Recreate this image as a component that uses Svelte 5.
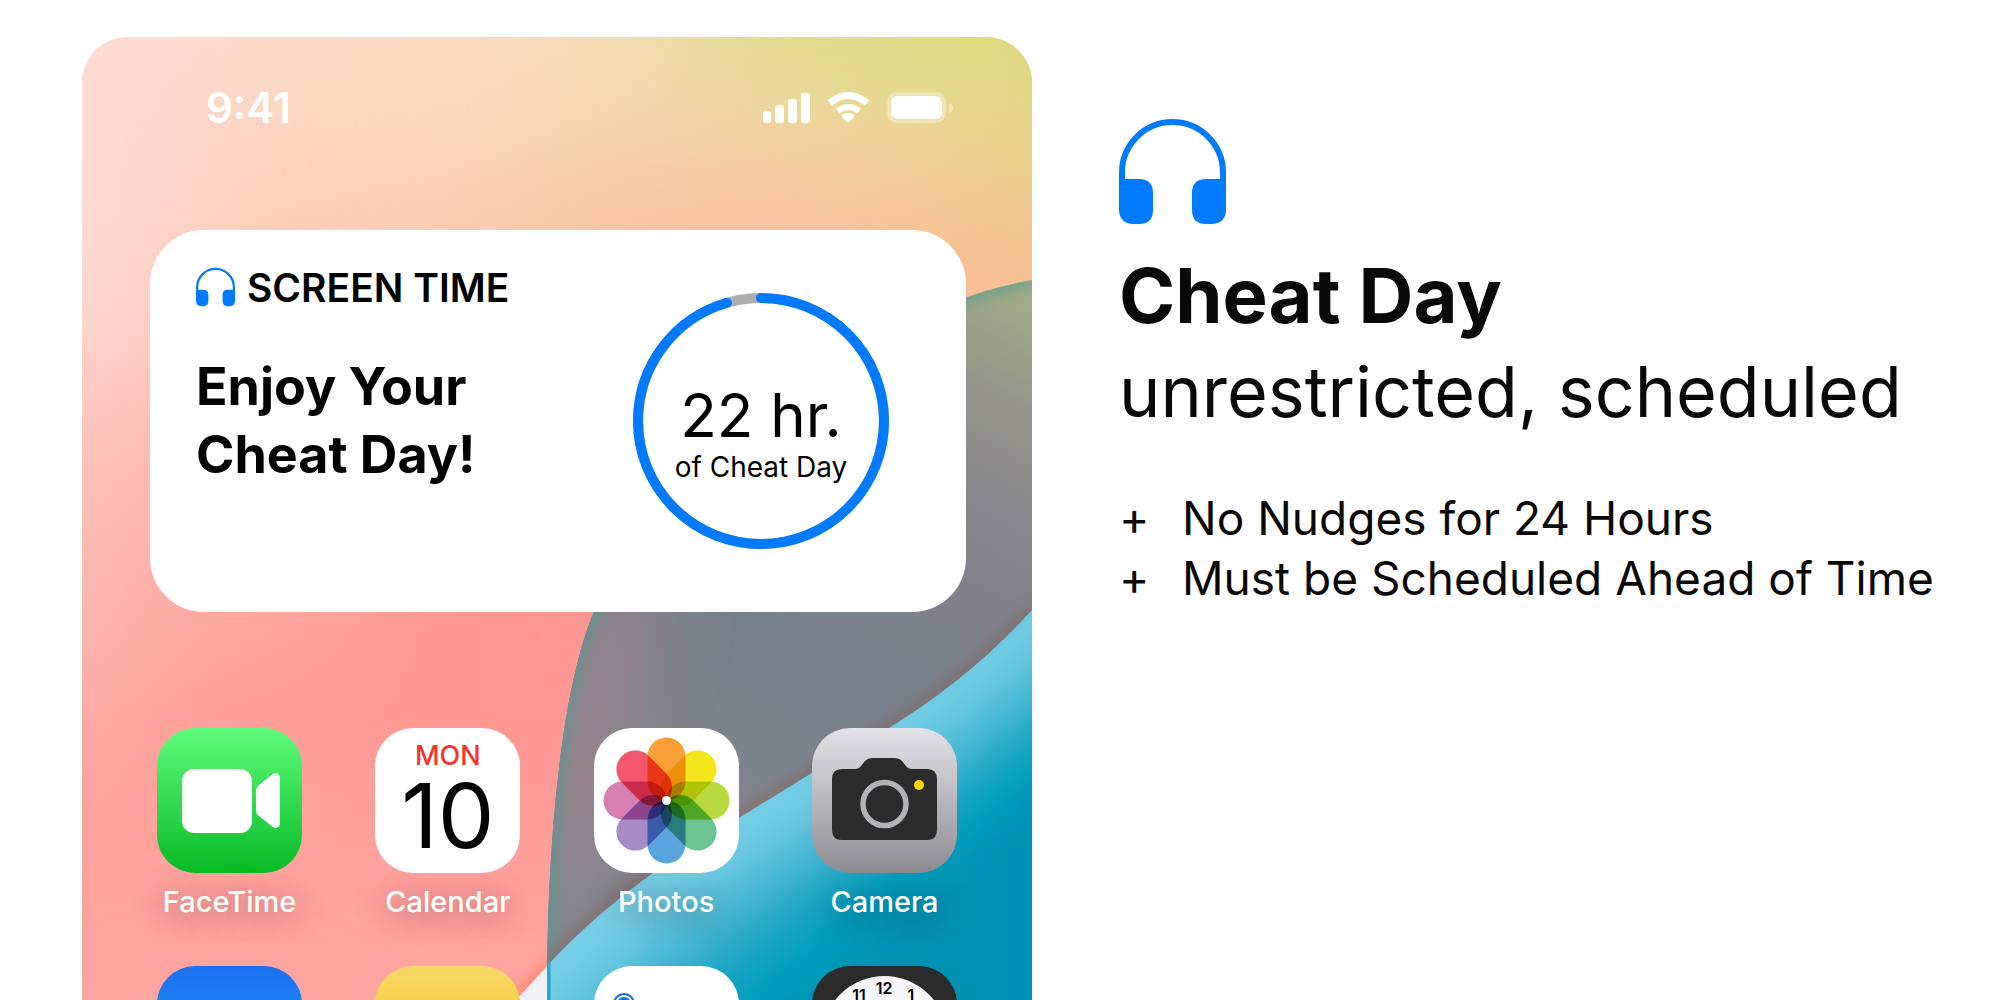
<script>
  const petals = ['#f8a035', '#f4e61c', '#b9d93f', '#6cc392', '#58a4de', '#a68bc8', '#d67fb4', '#f2586c'];
  const features = ['No Nudges for 24 Hours', 'Must be Scheduled Ahead of Time'];
  const ringLength = 2 * Math.PI * 123;
  const ringShare = 0.955;
</script>

{#snippet headphones()}
  <svg class="headphones" viewBox="0 0 107 105" aria-hidden="true">
    <path d="M3 62V53.500a50.500 50.500 0 0 1 101 0V62" fill="none" stroke="#007aff" stroke-width="6" />
    <path d="M0 60H20Q34 60 34 74V91Q34 105 20 105H15Q0 105 0 90Z" fill="#007aff" />
    <path d="M107 60H87Q73 60 73 74V91Q73 105 87 105H92Q107 105 107 90Z" fill="#007aff" />
  </svg>
{/snippet}

<main>
  <section class="phone" aria-label="Home screen">
    <svg class="wallpaper" viewBox="0 0 950 963" preserveAspectRatio="none" aria-hidden="true">
      <defs>
        <linearGradient id="sky" x1="0" y1="0" x2="0" y2="1">
          <stop offset="0" stop-color="#fbdcc6" />
          <stop offset="0.18" stop-color="#fccfb8" />
          <stop offset="0.45" stop-color="#ffb3a8" />
          <stop offset="0.7" stop-color="#ff9e9a" />
          <stop offset="1" stop-color="#ffa6a2" />
        </linearGradient>
        <linearGradient id="band" gradientUnits="userSpaceOnUse" x1="900" y1="240" x2="600" y2="800">
          <stop offset="0" stop-color="#a0ac86" />
          <stop offset="0.16" stop-color="#94948a" />
          <stop offset="0.35" stop-color="#85838c" />
          <stop offset="0.65" stop-color="#75808b" />
          <stop offset="1" stop-color="#84868f" />
        </linearGradient>
        <linearGradient id="sea" gradientUnits="userSpaceOnUse" x1="630" y1="740" x2="790" y2="930">
          <stop offset="0" stop-color="#62c3dd" />
          <stop offset="0.45" stop-color="#34adcb" />
          <stop offset="0.8" stop-color="#009dbd" />
          <stop offset="1" stop-color="#0092b4" />
        </linearGradient>
        <filter id="haze" filterUnits="userSpaceOnUse" x="-600" y="-600" width="2200" height="2200" color-interpolation-filters="sRGB"><feGaussianBlur stdDeviation="80" /></filter>
        <filter id="mist" filterUnits="userSpaceOnUse" x="-300" y="-300" width="1600" height="1600" color-interpolation-filters="sRGB"><feGaussianBlur stdDeviation="40" /></filter>
        <filter id="soft" filterUnits="userSpaceOnUse" x="-200" y="-200" width="1400" height="1400" color-interpolation-filters="sRGB"><feGaussianBlur stdDeviation="7" /></filter>
        <clipPath id="bandClip"><path d="M950 243C850 260 720 330 640 420C560 500 533 535 514 570C487 630 465 760 465 963H950Z" /></clipPath>
        <clipPath id="seaClip"><path d="M950 543V573Q890 640 807 691L730 736L657 781L571 836Q510 880 465 929V963H950Z" /></clipPath>
      </defs>
      <rect width="950" height="963" fill="url(#sky)" />
      <g filter="url(#haze)">
        <ellipse cx="-60" cy="120" rx="160" ry="330" fill="#ffdad6" />
        <ellipse cx="900" cy="-40" rx="330" ry="140" fill="#dddb7c" />
        <ellipse cx="1020" cy="110" rx="120" ry="90" fill="#e2d480" />
        <ellipse cx="540" cy="60" rx="150" ry="80" fill="#efdaae" />
        <ellipse cx="620" cy="225" rx="190" ry="50" fill="#fbb084" />
        <ellipse cx="900" cy="245" rx="130" ry="60" fill="#f8b27e" />
        <ellipse cx="440" cy="600" rx="150" ry="180" fill="#ff9490" />
        <ellipse cx="-60" cy="520" rx="90" ry="200" fill="#ffc4be" />
      </g>
      <path d="M470 920L425 963H470Z" fill="#ff8468" filter="url(#soft)" />
      <path d="M465 929Q446 950 434 963H465Z" fill="#f1f0f6" />
      <g clip-path="url(#bandClip)">
        <rect width="950" height="963" fill="url(#band)" />
        <path d="M545 540C510 640 480 740 480 820" fill="none" stroke="#ac8088" stroke-opacity="0.8" stroke-width="60" filter="url(#mist)" />
        <path d="M950 243C850 260 720 330 640 420C560 500 533 535 514 570C487 630 465 760 465 963" fill="none" stroke="#4f9c90" stroke-width="8" filter="url(#soft)" />
        <path d="M514 570C487 630 465 760 465 963" fill="none" stroke="#6e8f96" stroke-width="3" />
        <path d="M950 573Q890 640 807 691L730 736L657 781L571 836Q510 880 465 929" fill="none" stroke="#85655f" stroke-width="8" filter="url(#soft)" />
      </g>
      <g clip-path="url(#seaClip)">
        <rect x="465" y="543" width="485" height="420" fill="url(#sea)" />
        <path d="M1040 490Q890 640 807 691L730 736L657 781L571 836Q510 880 400 1000" fill="none" stroke="#8ad8ee" stroke-opacity="0.75" stroke-width="110" filter="url(#mist)" />
        <path d="M466 925V963" stroke="#25a9cc" stroke-width="5" />
      </g>
    </svg>

    <header class="status">
      <time>9:41</time>
      <svg class="signal" viewBox="0 0 190 34" role="img" aria-label="Signal, Wi-Fi and battery">
        <g fill="#fff">
          <rect x="0" y="20" width="8" height="12" rx="3" />
          <rect x="12" y="14" width="9" height="18" rx="3" />
          <rect x="25" y="8" width="9" height="24" rx="3" />
          <rect x="38" y="2" width="9" height="30" rx="3" />
          <path d="M85 32L79 26Q78 24 80 23Q85 21 90 23Q92 24 91 26Z" />
        </g>
        <path d="M67 12Q85 -3 104 12" fill="none" stroke="#fff" stroke-width="7" />
        <path d="M75 20Q85 12 96 20" fill="none" stroke="#fff" stroke-width="6" />
        <rect x="125" y="2" width="57" height="29" rx="9" fill="#fff" fill-opacity="0.25" stroke="#fff" stroke-opacity="0.25" stroke-width="3" />
        <rect x="128" y="5" width="51" height="23" rx="6" fill="#fff" />
        <path d="M186 12Q190 13 190 17T186 22Z" fill="#fff" fill-opacity="0.4" />
      </svg>
    </header>

    <article class="widget">
      <div class="message">
        <p class="eyebrow">{@render headphones()}<span>SCREEN TIME</span></p>
        <h2>Enjoy Your<br />Cheat Day!</h2>
      </div>
      <div class="ring">
        <svg viewBox="0 0 256 256" aria-hidden="true">
          <circle cx="128" cy="128" r="123" fill="none" stroke="#adadad" stroke-width="10" />
          <circle
            cx="128"
            cy="128"
            r="123"
            fill="none"
            stroke="#007aff"
            stroke-width="10"
            stroke-linecap="round"
            stroke-dasharray="{ringLength * ringShare} {ringLength}"
            transform="rotate(-90 128 128)"
          />
        </svg>
        <p><strong>22 hr.</strong><span>of Cheat Day</span></p>
      </div>
    </article>

    <nav class="apps" aria-label="Apps">
      <button class="app">
        <span class="icon facetime">
          <svg viewBox="0 0 145 145" aria-hidden="true" fill="#fff">
            <rect x="25" y="41" width="70" height="64" rx="12" />
            <path d="M99 62Q99 59 102 57L116 46Q119 44 121 46Q123 47 123 50V95Q123 98 121 99Q119 101 116 99L102 88Q99 86 99 83Z" />
          </svg>
        </span>
        <span class="label">FaceTime</span>
      </button>
      <button class="app">
        <span class="icon calendar"><span class="weekday">MON</span><span class="day">10</span></span>
        <span class="label">Calendar</span>
      </button>
      <button class="app">
        <span class="icon white">
          <svg viewBox="0 0 145 145" aria-hidden="true">
            <g transform="translate(72.500 72.500)">
              {#each petals as color, i}
                <rect class="petal" x="-19" y="-63" width="38" height="63" rx="19" fill={color} transform="rotate({i * 45})" />
              {/each}
              <circle r="4.500" fill="#fff" />
            </g>
          </svg>
        </span>
        <span class="label">Photos</span>
      </button>
      <button class="app">
        <span class="icon camera">
          <svg viewBox="0 0 145 145" aria-hidden="true">
            <path d="M20 51Q20 41 30 41H43Q47 41 49 38L53 33Q56 30 61 30H82Q87 30 90 33L94 38Q96 41 100 41H115Q125 41 125 51V102Q125 112 115 112H30Q20 112 20 102Z" fill="#2b2b2b" />
            <circle cx="72.500" cy="76" r="21.500" fill="none" stroke="#b3b2b6" stroke-width="5.500" />
            <circle cx="107" cy="57" r="5" fill="#ffd500" />
          </svg>
        </span>
        <span class="label">Camera</span>
      </button>
      <button class="app" aria-label="Mail"><span class="icon mail"></span></button>
      <button class="app" aria-label="Notes"><span class="icon notes"></span></button>
      <button class="app" aria-label="Reminders">
        <span class="icon white">
          <svg viewBox="0 0 145 145" aria-hidden="true">
            <circle cx="30" cy="38" r="10" fill="none" stroke="#1473f5" stroke-width="2" />
            <circle cx="30" cy="38" r="7" fill="#1473f5" />
          </svg>
        </span>
      </button>
      <button class="app" aria-label="Clock">
        <span class="icon clock">
          <svg viewBox="0 0 145 145" aria-hidden="true">
            <circle cx="72.500" cy="72.500" r="62.500" fill="#f7f7f9" />
            <g class="numerals"><text x="72" y="28">12</text><text x="47" y="35">11</text><text x="99" y="35">1</text></g>
          </svg>
        </span>
      </button>
    </nav>
  </section>

  <section class="about">
    {@render headphones()}
    <h1>Cheat Day</h1>
    <p class="tagline">unrestricted, scheduled</p>
    <ul>
      {#each features as feature}
        <li>{feature}</li>
      {/each}
    </ul>
  </section>
</main>

<style>
  :global(body) {
    margin: 0;
    background: #fff;
  }

  main {
    box-sizing: border-box;
    display: grid;
    grid-template-columns: 950fr 881fr;
    gap: 87px;
    height: 100vh;
    padding: 37px 0 0 82px;
    overflow: hidden;
    font-family: Inter, 'Liberation Sans', sans-serif;
    color: #000;
  }

  h1, h2, p, ul { margin: 0; padding: 0; }

  .phone {
    position: relative;
    display: flex;
    flex-direction: column;
    min-width: 0;
    padding: 0 66px 0 68px;
    border-radius: 46px 46px 0 0;
    overflow: hidden;
  }

  .wallpaper {
    position: absolute;
    inset: 0;
    width: 100%;
    height: 100%;
  }

  .status {
    position: relative;
    display: flex;
    justify-content: space-between;
    align-items: center;
    padding: 45px 13px 97px 56px;
    color: #fff;
  }

  time { font-size: 42px; font-weight: 600; line-height: 51px; }

  .signal { width: 190px; height: 34px; }

  .widget {
    position: relative;
    box-sizing: border-box;
    display: flex;
    justify-content: space-between;
    min-height: 382px;
    padding: 36px 77px 62px 46px;
    border-radius: 54px;
    background: #fff;
  }

  .eyebrow {
    display: flex;
    align-items: center;
    gap: 12px;
    height: 42px;
    font-size: 39px;
    font-weight: 600;
    white-space: nowrap;
  }

  .eyebrow :global(.headphones) { width: 39px; height: 40px; }

  h2 {
    margin-top: 45px;
    font-size: 52px;
    font-weight: 700;
    line-height: 68px;
    white-space: nowrap;
  }

  .ring {
    display: grid;
    flex: none;
    width: 256px;
    height: 256px;
    margin-top: 27px;
  }

  .ring svg, .ring p { grid-area: 1 / 1; }

  .ring p {
    display: flex;
    flex-direction: column;
    align-items: center;
    padding-top: 86px;
    white-space: nowrap;
  }

  .ring strong { font-size: 60px; font-weight: 400; line-height: 72px; }
  .ring span { font-size: 28px; line-height: 32px; }

  .apps {
    position: relative;
    display: grid;
    grid-template-columns: repeat(4, 145px);
    justify-content: space-between;
    row-gap: 45px;
    padding: 116px 9px 0 7px;
  }

  .app {
    display: flex;
    flex-direction: column;
    align-items: center;
    gap: 10px;
    padding: 0;
    border: 0;
    background: none;
    font: inherit;
    color: #fff;
  }

  .icon {
    display: flex;
    flex-direction: column;
    align-items: center;
    width: 145px;
    height: 145px;
    border-radius: 38px;
    overflow: hidden;
  }

  .icon svg { width: 145px; height: 145px; isolation: isolate; }
  .petal { mix-blend-mode: multiply; }

  .facetime { background: linear-gradient(#5ffb7b, #07bb23); }
  .calendar, .white { background: #fff; }
  .camera { background: linear-gradient(#e3e2e8, #8d8c91); }
  .mail { background: linear-gradient(#1c70f0, #1d9bfa 70%); }
  .notes { background: linear-gradient(#f7d968, #f5c91f 60%); }
  .clock { background: #2b2b2b; }

  .weekday {
    margin-top: 12px;
    font-size: 27px;
    font-weight: 500;
    line-height: 32px;
    color: #f3352c;
  }

  .day { font-size: 90px; line-height: 88px; color: #000; }

  .label {
    font-size: 29px;
    font-weight: 500;
    line-height: 38px;
    text-shadow: 0 4px 28px rgb(60 30 40 / 50%);
  }

  .numerals {
    font-size: 16px;
    font-weight: 600;
    text-anchor: middle;
  }

  .about { padding-top: 82px; min-width: 0; color: #0a0908; }
  .about > :global(.headphones) { display: block; width: 107px; height: 105px; }

  h1 {
    margin-top: 24px;
    font-size: 76px;
    font-weight: 700;
    line-height: 95px;
    white-space: nowrap;
  }

  .tagline { font-size: 70px; line-height: 98px; white-space: nowrap; }

  ul { margin-top: 47px; list-style: none; }

  li {
    display: flex;
    font-size: 46px;
    line-height: 60px;
    white-space: nowrap;
  }

  li::before { content: '+'; width: 63px; }
</style>
